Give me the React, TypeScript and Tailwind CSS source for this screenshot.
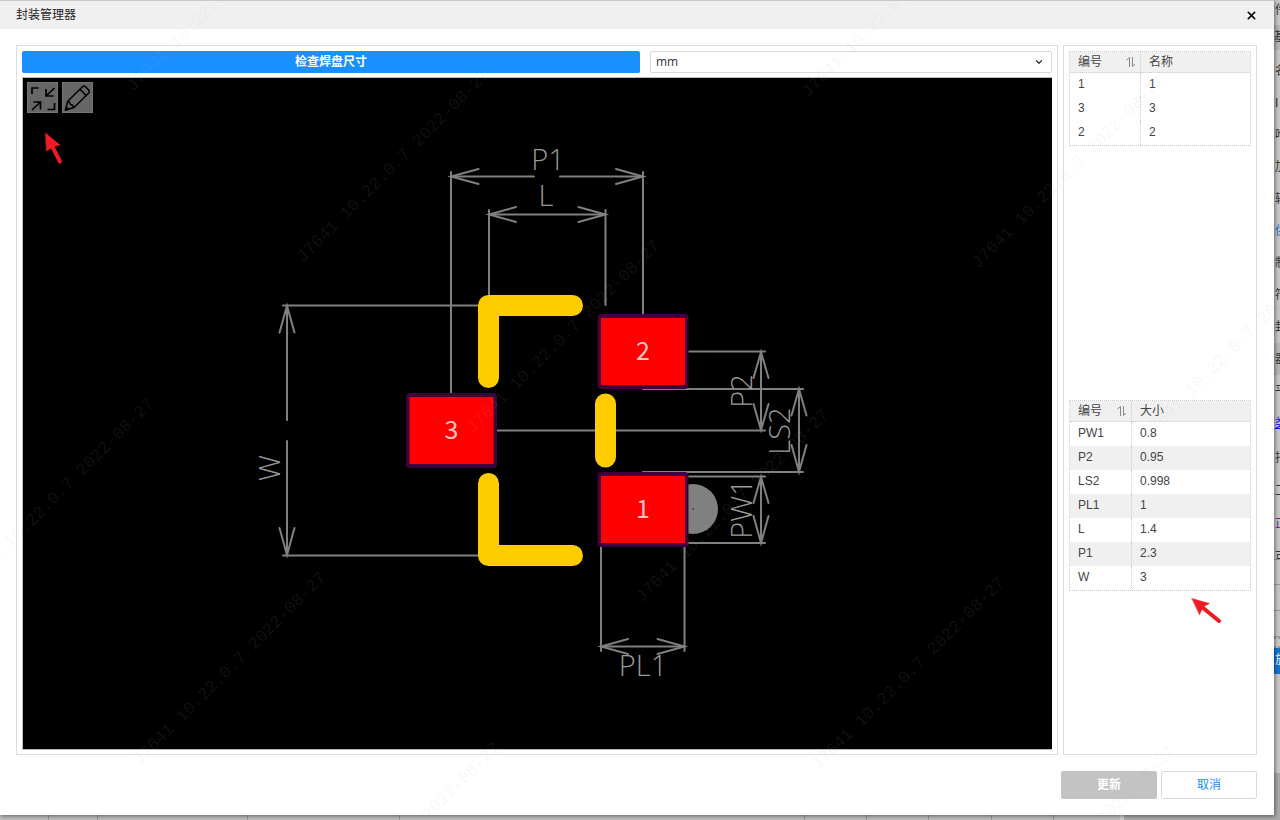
import { useState } from 'react';
import { X, ChevronDown } from 'lucide-react';
import clsx from 'clsx';

interface Row {
  id: string;
  value: string;
}

const pins: Row[] = [
  { id: '1', value: '1' },
  { id: '3', value: '3' },
  { id: '2', value: '2' },
];

const sizes: Row[] = [
  { id: 'PW1', value: '0.8' },
  { id: 'P2', value: '0.95' },
  { id: 'LS2', value: '0.998' },
  { id: 'PL1', value: '1' },
  { id: 'L', value: '1.4' },
  { id: 'P1', value: '2.3' },
  { id: 'W', value: '3' },
];

function SortIcon() {
  return (
    <svg width="10" height="12" viewBox="0 0 10 12" fill="none" stroke="#888" strokeWidth="1" aria-hidden="true">
      <path d="M0.5 4 L3.5 1.5 V11 M6.5 1 V10.5 L9 8" />
    </svg>
  );
}

interface DataTableProps {
  valueLabel: string;
  rows: Row[];
  idWidth: string;
  striped?: boolean;
}

function DataTable({ valueLabel, rows, idWidth, striped }: DataTableProps) {
  return (
    <table className="w-full table-fixed border-separate border-spacing-0 border border-dotted border-[#ccc] text-left text-xs text-[#444]">
      <thead className="bg-[#f0f0f0]">
        <tr className="h-[21px]">
          <th className={clsx('border-r border-b border-dotted border-[#ccc] pl-2 pr-1 font-normal', idWidth)}>
            <button className="flex w-full items-center justify-between leading-5">
              编号
              <SortIcon />
            </button>
          </th>
          <th className="border-b border-dotted border-[#ccc] px-2 font-normal leading-5">{valueLabel}</th>
        </tr>
      </thead>
      <tbody>
        {rows.map((row, index) => (
          <tr key={row.id} className={clsx('h-6', striped && index % 2 === 1 && 'bg-[#f0f0f0]')}>
            <td className="border-r border-dotted border-[#ccc] px-2 pb-[3px]">{row.id}</td>
            <td className="px-2 pb-[3px]">{row.value}</td>
          </tr>
        ))}
      </tbody>
    </table>
  );
}

function Pad({ x, y, label }: { x: number; y: number; label: string }) {
  return (
    <g>
      <rect x={x - 45.5} y={y - 37.5} width="91" height="75" rx="4" fill="#400040" />
      <rect x={x - 42} y={y - 33.5} width="84" height="67" fill="#f00" />
      <text
        x={x}
        y={y + 8}
        textAnchor="middle"
        fill="#ffc4c4"
        className="font-['Noto_Sans_CJK_SC',sans-serif] text-[25px]"
      >
        {label}
      </text>
    </g>
  );
}

function DimensionLabel({ x, y, vertical, children }: { x: number; y: number; vertical?: boolean; children: string }) {
  return (
    <text
      x={x}
      y={y}
      textAnchor="middle"
      fill="#999"
      transform={vertical ? `rotate(-90 ${x} ${y})` : undefined}
      className="font-['Open_Sans',sans-serif] text-[29px] font-light"
    >
      {children}
    </text>
  );
}

function Footprint() {
  return (
    <svg viewBox="23 78 1029 671" className="block h-full w-full" role="img" aria-label="SOT-23">
      {/* dimension lines */}
      <g fill="none" stroke="#808080" strokeWidth="2" strokeLinecap="round">
        <path d="M451 172 V394 M643 172 V314 M451 176.5 H534 M560 176.5 H643" />
        <path d="M478.5 169 L451 176.5 L478.5 184 M616 169 L643 176.5 L616 184" />
        <path d="M489 210 V296 M605.5 210 V305 M489 214.5 H605.5" />
        <path d="M516 207 L489 214.5 L516 222 M578.5 207 L605.5 214.5 L578.5 222" />
        <path d="M283 305.5 H489 M283 555.5 H489 M287 306 V420 M287 441 V555" />
        <path d="M279.5 332.5 L287 306 L294.5 332.5 M279.5 528 L287 555 L294.5 528" />
        <path d="M689 351.5 H765 M497 430.5 H765 M761 352 V430" />
        <path d="M753.5 378 L761 352 L768.5 378 M753.5 404 L761 430 L768.5 404" />
        <path d="M643 389 H803 M643 472 H803 M799 389 V472" />
        <path d="M791.5 415.5 L799 389 L806.5 415.5 M791.5 445 L799 472 L806.5 445" />
        <path d="M685 476.5 H765 M685 543 H765 M761 477 V543" />
        <path d="M753.5 503 L761 477 L768.5 503 M753.5 516 L761 543 L768.5 516" />
        <path d="M601 545 V651 M684.5 545 V651 M601 646.5 H684.5" />
        <path d="M628 639 L601 646.5 L628 654 M657.5 639 L684.5 646.5 L657.5 654" />
      </g>
      <DimensionLabel x={548} y={170}>P1</DimensionLabel>
      <DimensionLabel x={546} y={206}>L</DimensionLabel>
      <DimensionLabel x={643} y={676}>PL1</DimensionLabel>
      <DimensionLabel x={280} y={468} vertical>W</DimensionLabel>
      <DimensionLabel x={752} y={391} vertical>P2</DimensionLabel>
      <DimensionLabel x={790} y={431} vertical>LS2</DimensionLabel>
      <DimensionLabel x={752} y={509} vertical>PW1</DimensionLabel>

      {/* silkscreen */}
      <g fill="none" stroke="#fc0" strokeWidth="21" strokeLinecap="round" strokeLinejoin="round">
        <path d="M572.5 305.5 H488.5 V377.5" />
        <path d="M605.5 404 V457" />
        <path d="M488.5 483.5 V555.5 H572.5" />
      </g>
      <circle cx="693" cy="509" r="25" fill="#808080" />
      <circle cx="693" cy="509" r="1" fill="#444" />
      <Pad x={643} y={351.5} label="2" />
      <Pad x={451.5} y={430.5} label="3" />
      <Pad x={643} y={509.5} label="1" />
    </svg>
  );
}

const watermarks = [
  [133, 92],
  [303, 263],
  [473, 434],
  [642, 603],
  [-33, 592],
  [139, 766],
  [313, 936],
  [808, 98],
  [978, 269],
  [1148, 440],
  [818, 771],
  [988, 940],
];

function Overlay() {
  return (
    <svg
      viewBox="0 0 1280 820"
      preserveAspectRatio="xMinYMin meet"
      className="pointer-events-none absolute inset-0 z-20 h-full w-full"
      aria-hidden="true"
    >
      <g fill="#b0b0b0" fillOpacity="0.1" className="font-['Liberation_Mono',monospace] text-[17px]">
        {watermarks.map(([x, y]) => (
          <text key={`${x}-${y}`} transform={`translate(${x} ${y}) rotate(-45)`}>
            J7641 10.22.0.7 2022-08-27
          </text>
        ))}
      </g>
      <g fill="#ed1c24" stroke="#ed1c24" strokeLinejoin="round" strokeLinecap="round">
        <path d="M45.5 133 L60 145 L54 146.5 L46.5 151 Z" strokeWidth="0.5" />
        <path d="M52 146 L60 161.5" strokeWidth="4" />
        <path d="M1192 598.5 L1209.5 603.5 L1203.5 606.5 L1199.5 614.5 Z" strokeWidth="0.5" />
        <path d="M1202 607 L1219 621" strokeWidth="4" />
      </g>
    </svg>
  );
}

const sideItems = ['名', 'I', '唯', '加', '转', '供', '制', '符', '封', '器', '平', '类'];
const sideTail = ['指', '工', '正'];

// sliver of the editor's property panel, cut off by the dialog
function SidePanel() {
  return (
    <aside className="flex w-[6px] shrink-0 flex-col overflow-hidden bg-[#c8c8c8] text-xs text-[#333]">
      <div className="h-[25px] pl-px leading-5">件</div>
      <div className="mb-[5px] h-[25px] bg-[#b8b8b8] leading-6">基</div>
      {sideItems.map((item) => (
        <div
          key={item}
          className={clsx(
            'h-8 pl-px leading-8',
            item === '器' && 'bg-[#b8b8b8]',
            item === '类' && 'text-[#00e] underline',
            item === '供' && 'text-[#1874cd]',
          )}
        >
          {item}
        </div>
      ))}
      <div className="h-[3px]" />
      {sideTail.map((item) => (
        <div key={item} className={clsx('h-[33px] pl-px leading-[33px]', item === '正' && 'text-[#71217d]')}>
          {item}
        </div>
      ))}
      <div className="h-[19px] overflow-hidden border-b border-[#999] pl-px leading-8">可</div>
      <div className="h-[25px] border-b border-[#999]" />
      <div className="h-[26px] border-b border-[#999]" />
      <div className="h-[26px] border-b border-[#999]" />
      <div className="h-[11px] border-y-2 border-dotted border-[#999]" />
      <div className="h-[26px] shrink-0 bg-[#1577d2] pl-px leading-6 text-white">放</div>
      <div className="h-[99px] shrink-0" />
      <div className="flex-1 bg-[#a9a9a9]" />
    </aside>
  );
}

function BottomStrip() {
  return (
    <div className="flex h-[5px] shrink-0 bg-[#bdbdbd]">
      <div className="w-[49px] border-r border-[#999]" />
      <div className="w-[49px] border-r border-[#999]" />
      <div className="w-[150px] border-r border-[#999]" />
      <div className="w-[152px] border-r border-[#999]" />
      <div className="w-[405px] border-r border-[#999]" />
      <div className="w-[62px] border-r border-[#999]" />
      <div className="w-[62px] border-r border-[#999]" />
      <div className="w-[63px] border-r border-[#999]" />
      <div className="w-[62px] border-r border-[#999]" />
      <div className="w-[70px] border-r-4 border-[#d0d0d0]" />
      <div className="flex-1 bg-[#a9a9a9]" />
    </div>
  );
}

const toolButton = 'flex size-[31px] items-center justify-center border border-[#757575] bg-[#666]';

export default function App() {
  const [unit, setUnit] = useState('mm');

  return (
    <div className="relative flex h-screen flex-col overflow-hidden bg-[#c8c8c8] font-['Liberation_Sans','Noto_Sans_CJK_SC',sans-serif]">
      <div className="flex min-h-0 flex-1">
        <main className="relative z-10 flex min-w-0 flex-1 flex-col border-t border-[#c8c8c8] bg-white shadow-[1px_1px_4px_rgba(0,0,0,0.5)]">
          <header className="flex h-7 shrink-0 items-center justify-between bg-[#f0f0f0] px-4 text-xs text-[#222]">
            <h1>封装管理器</h1>
            <button aria-label="关闭" className="text-black">
              <X size={13} strokeWidth={3} />
            </button>
          </header>

          <div className="flex min-h-0 flex-1 gap-[5px] pt-4 pr-[17px] pl-4">
            <section className="flex min-w-0 flex-1 flex-col border border-[#ddd] px-[5px] pt-[5px] pb-1">
              <div className="mb-1 flex h-[22px] shrink-0 gap-[10px]">
                <button className="w-3/5 rounded-xs bg-[#1890ff] text-xs font-bold text-white">检查焊盘尺寸</button>
                <div className="relative h-full flex-1">
                  <select
                    aria-label="单位"
                    value={unit}
                    onChange={(e) => setUnit(e.target.value)}
                    className="block h-full w-full appearance-none rounded-xs border border-[#d9d9d9] bg-white px-[5px] font-['Open_Sans',sans-serif] text-xs text-[#333]"
                  >
                    <option>mm</option>
                    <option>mil</option>
                    <option>inch</option>
                  </select>
                  <ChevronDown
                    size={10}
                    strokeWidth={3}
                    className="pointer-events-none absolute top-[6px] right-2 text-[#333]"
                  />
                </div>
              </div>
              <div className="relative min-h-0 flex-1 border-y border-l border-[#bbb] bg-black">
                <Footprint />
                <div className="absolute top-1 left-1 flex gap-1">
                  <button aria-label="适合窗口" className={toolButton}>
                    <svg width="31" height="31" viewBox="0 0 31 31" className="shrink-0" fill="none" stroke="#000" strokeWidth="1.7">
                      <path d="M5 12 V6 H11.5 M27.5 6 L19 14 M19 7 V14 H26.5 M5 28 L13.5 20 M6.5 20 H13.5 V27.5 M20.5 27.5 H27.5 V21" />
                    </svg>
                  </button>
                  <button aria-label="编辑" className={toolButton}>
                    <svg width="31" height="31" viewBox="0 0 31 31" className="shrink-0" fill="none" stroke="#000" strokeWidth="1.5" strokeLinejoin="round">
                      <path d="M3.5 28 L5.7 19.3 L20.5 4.8 Q22 3.4 23.6 4.8 L26.7 8 Q28 9.5 26.7 11 L12 25.5 Z" />
                      <path d="M5.7 19.3 Q8 20 8.4 22.4 Q11 22.5 12 25.5 M18 7.3 L24.2 13.5" />
                      <path d="M3.5 28 L4.3 25 L6.6 27 Z" fill="#000" />
                    </svg>
                  </button>
                </div>
              </div>
            </section>

            <section className="flex w-[194px] shrink-0 flex-col border border-[#ddd] p-[5px]">
              <div className="flex-1">
                <DataTable valueLabel="名称" rows={pins} idWidth="w-[71px]" />
              </div>
              <div className="flex-1">
                <DataTable valueLabel="大小" rows={sizes} idWidth="w-[62px]" striped />
              </div>
            </section>
          </div>

          <footer className="flex shrink-0 justify-end gap-1 py-4 pr-[17px] text-xs">
            <button disabled className="h-7 w-24 rounded-xs bg-[#c3c3c3] font-bold text-white">
              更新
            </button>
            <button className="h-7 w-24 rounded-xs border border-[#d9d9d9] bg-white text-[#1890ff]">取消</button>
          </footer>
        </main>
        <SidePanel />
      </div>
      <BottomStrip />
      <Overlay />
    </div>
  );
}
